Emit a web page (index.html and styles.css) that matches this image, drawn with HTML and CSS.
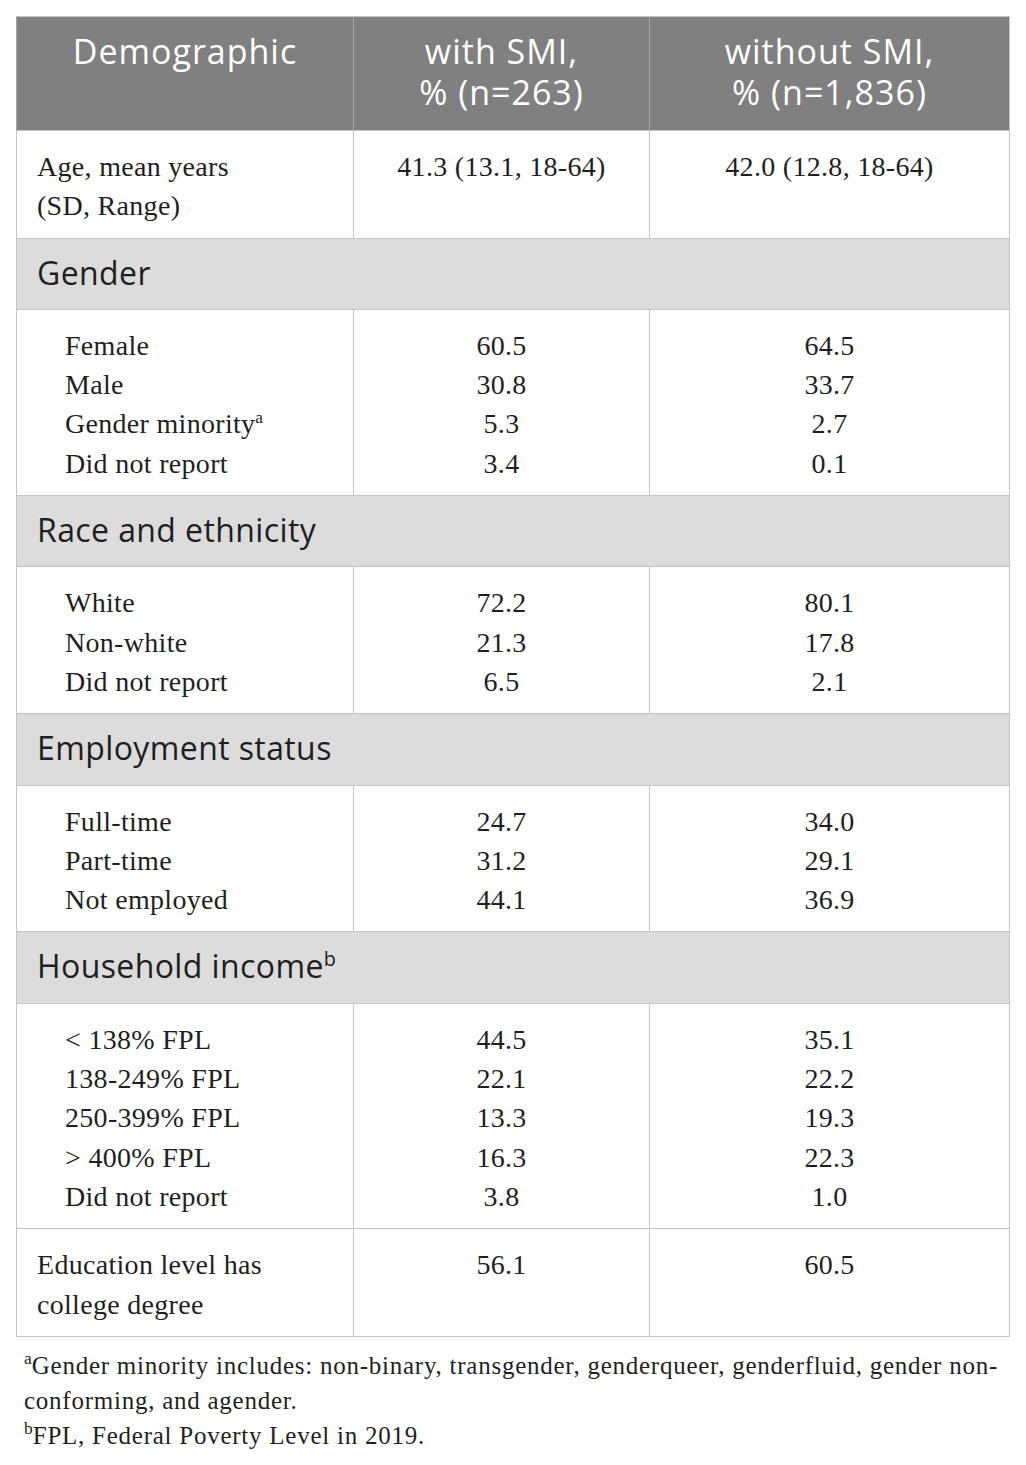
FILE: index.html
```html
<!DOCTYPE html>
<html lang="en">
	<head>
		<meta charset="UTF-8" />
		<title>Demographics</title>
		<link rel="stylesheet" href="styles.css">
	</head>
	<body>
		<div class="table-wrap">
			<table class="demo-table">
				<colgroup>
					<col class="col-label" />
					<col class="col-smi" />
					<col class="col-nosmi" />
				</colgroup>
				<thead>
					<tr>
						<th>Demographic</th>
						<th>with SMI,<br />% (n=263)</th>
						<th>without SMI,<br />% (n=1,836)</th>
					</tr>
				</thead>
				<tbody>
					<tr>
						<td>Age, mean years<br />(SD, Range)</td>
						<td class="num">41.3 (13.1, 18-64)</td>
						<td class="num">42.0 (12.8, 18-64)</td>
					</tr>
					<tr class="section">
						<td colspan="3">Gender</td>
					</tr>
					<tr>
						<td class="indent">Female<br />Male<br />Gender minority<sup>a</sup><br />Did not report</td>
						<td class="num">60.5<br />30.8<br />5.3<br />3.4</td>
						<td class="num">64.5<br />33.7<br />2.7<br />0.1</td>
					</tr>
					<tr class="section">
						<td colspan="3">Race and ethnicity</td>
					</tr>
					<tr>
						<td class="indent">White<br />Non-white<br />Did not report</td>
						<td class="num">72.2<br />21.3<br />6.5</td>
						<td class="num">80.1<br />17.8<br />2.1</td>
					</tr>
					<tr class="section">
						<td colspan="3">Employment status</td>
					</tr>
					<tr>
						<td class="indent">Full-time<br />Part-time<br />Not employed</td>
						<td class="num">24.7<br />31.2<br />44.1</td>
						<td class="num">34.0<br />29.1<br />36.9</td>
					</tr>
					<tr class="section">
						<td colspan="3">Household income<sup>b</sup></td>
					</tr>
					<tr>
						<td class="indent">&lt; 138% FPL<br />138-249% FPL<br />250-399% FPL<br />&gt; 400% FPL<br />Did not report</td>
						<td class="num">44.5<br />22.1<br />13.3<br />16.3<br />3.8</td>
						<td class="num">35.1<br />22.2<br />19.3<br />22.3<br />1.0</td>
					</tr>
					<tr>
						<td>Education level has<br />college degree</td>
						<td class="num">56.1</td>
						<td class="num">60.5</td>
					</tr>
				</tbody>
			</table>
			<div class="notes">
				<p><sup>a</sup>Gender minority includes: non-binary, transgender, genderqueer, genderfluid, gender non-conforming, and agender.</p>
				<p><sup>b</sup>FPL, Federal Poverty Level in 2019.</p>
			</div>
		</div>
	</body>
</html>
```

FILE: styles.css
```css
body {
	margin: 0;
	padding: 16px 16px 0 16px;
	background-color: white;
	color: #1f1f1f;
	font-family: 'Liberation Serif', 'Times New Roman', serif;
}
.table-wrap {
	width: 994px;
}
.demo-table {
	width: 100%;
	border-collapse: collapse;
	table-layout: fixed;
	border: 1px solid #c4c4c4;
}
.col-label {
	width: 337px;
}
.col-smi {
	width: 296px;
}
.demo-table th {
	background-color: #808080;
	color: white;
	font-family: 'Open Sans', 'Noto Sans', sans-serif;
	font-weight: normal;
	font-size: 34px;
	letter-spacing: 1px;
	line-height: 41px;
	padding: 14px 10px 17px;
	text-align: center;
	vertical-align: top;
	border-left: 1px solid #a8a8a8;
}
.demo-table td {
	font-size: 28px;
	letter-spacing: 0.3px;
	line-height: 39.3px;
	padding: 16px 20px 12px;
	vertical-align: top;
	border-top: 1px solid #c4c4c4;
	border-left: 1px solid #c4c4c4;
}
.demo-table td.num {
	text-align: center;
}
.demo-table td.indent {
	padding-left: 48px;
}
.section td {
	background-color: #dcdcdc;
	font-family: 'Open Sans', 'Noto Sans', sans-serif;
	font-size: 32px;
	letter-spacing: 0.4px;
	padding: 14px 20px 17px;
}
sup {
	font-size: 62%;
	line-height: 0;
	vertical-align: 0.6em;
}
.notes {
	padding: 11px 0 0 8px;
	font-size: 25px;
	line-height: 35px;
	letter-spacing: 0.75px;
}
.notes sup {
	font-size: 70%;
	letter-spacing: 0;
}
.notes p {
	margin: 0;
}
```
